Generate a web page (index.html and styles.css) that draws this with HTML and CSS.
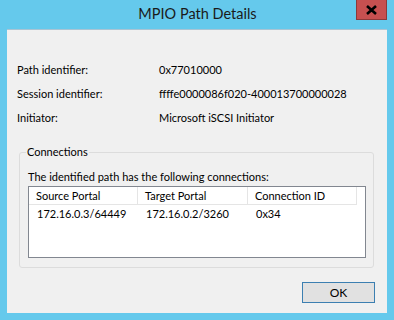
FILE: index.html
```html
<!DOCTYPE html>
<html lang="en">

<head>
  <meta charset="UTF-8">
  <title>MPIO Path Details</title>
  <link rel="stylesheet" href="styles.css">
</head>

<body>
  <div class="window">
    <div class="titlebar">
      <span class="title">MPIO Path Details</span>
      <span class="close-btn">
        <svg width="13" height="10" viewBox="0 0 13 10">
          <path d="M2 1 L11 9 M11 1 L2 9" stroke="#000" stroke-width="2.6" />
        </svg>
      </span>
    </div>

    <div class="client">
      <div class="fields">
        <div class="field">
          <span class="label">Path identifier:</span>
          <span class="value">0x77010000</span>
        </div>
        <div class="field">
          <span class="label">Session identifier:</span>
          <span class="value">ffffe0000086f020-400013700000028</span>
        </div>
        <div class="field">
          <span class="label">Initiator:</span>
          <span class="value">Microsoft iSCSI Initiator</span>
        </div>
      </div>

      <!-- Grupo de conexiones -->
      <fieldset class="group">
        <legend>Connections</legend>
        <p class="intro">The identified path has the following connections:</p>
        <div class="listview">
          <div class="lv-row lv-header">
            <span class="col">Source Portal</span>
            <span class="col">Target Portal</span>
            <span class="col">Connection ID</span>
          </div>
          <div class="lv-row">
            <span class="col">172.16.0.3/64449</span>
            <span class="col">172.16.0.2/3260</span>
            <span class="col">0x34</span>
          </div>
        </div>
      </fieldset>

      <div class="buttons">
        <button class="btn">OK</button>
      </div>
    </div>
  </div>
</body>

</html>
```

FILE: styles.css
```css
body {
  margin: 0;
  font-family: "Segoe UI", Lato, "Liberation Sans", sans-serif;
  font-size: 11px;
  color: #000;
  background: #65c9ec;
}

.window {
  width: 394px;
  height: 320px;
  background: #65c9ec;
  position: relative;
  overflow: hidden;
}

.titlebar {
  height: 29px;
  display: flex;
  justify-content: center;
  align-items: flex-start;
}

.title {
  font-size: 14.5px;
  color: #1a1a1a;
  margin-top: 5px;
  margin-left: 1px;
}

.close-btn {
  position: absolute;
  top: 0;
  right: 7px;
  width: 31px;
  height: 20px;
  background: #c75050;
  border: 1px solid #8c3a3a;
  border-top: none;
  box-sizing: border-box;
  display: flex;
  align-items: center;
  justify-content: center;
}

.client {
  margin: 0 7px;
  height: 284px;
  background: #f0f0f0;
  border-top: 1px solid #a9c4d4;
  box-sizing: border-box;
  display: flex;
  flex-direction: column;
}

.fields {
  padding: 28px 0 0 10px;
}

.field {
  display: flex;
  height: 24px;
  line-height: 24px;
}

.label {
  width: 142px;
}

.group {
  margin: 14px 13px 0 12px;
  padding: 0 7px 9px 8px;
  border: 1px solid #dcdcdc;
  border-radius: 3px;
}

.group legend {
  padding: 0 1px;
  margin-left: -2px;
  line-height: 16px;
}

.intro {
  margin: 9px 0 0 0;
  line-height: 16px;
}

.listview {
  margin-top: 1px;
  height: 70px;
  border: 1px solid #828790;
  background: #fff;
}

.lv-row {
  display: flex;
  height: 17px;
  line-height: 17px;
}

.lv-header {
  height: 18px;
}

.lv-header .col {
  border-right: 1px solid #e5e5e5;
  border-bottom: 1px solid #e5e5e5;
}

.col {
  width: 109px;
  padding-left: 7px;
  box-sizing: border-box;
}

.lv-row .col:nth-child(2) {
  width: 110px;
}

.lv-row:not(.lv-header) .col {
  padding-left: 8px;
}

.buttons {
  display: flex;
  justify-content: flex-end;
  padding: 14px 12px 0 0;
}

.btn {
  width: 73px;
  height: 21px;
  font-family: inherit;
  font-size: 12px;
  background: #e1e1e1;
  border: 1px solid #3c7fb1;
  padding: 0;
  color: #000;
}
```
